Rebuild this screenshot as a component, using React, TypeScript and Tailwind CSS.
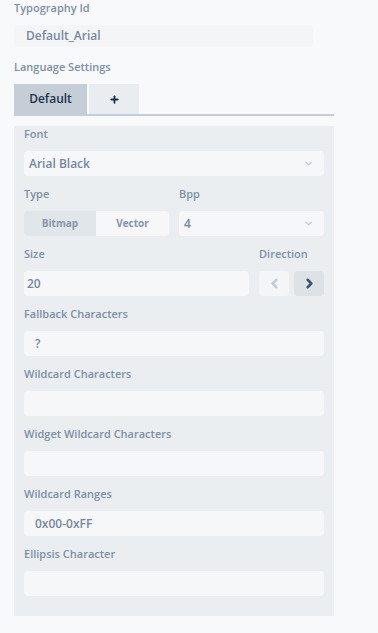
import { ChevronDown, ChevronLeft, ChevronRight, Plus } from 'lucide-react';

const Label = ({ children }: { children: React.ReactNode }) => (
  <div className="h-4 mt-[10px] mb-[9px] text-[11px] leading-4 font-semibold text-[#7f8ea3]">{children}</div>
);

const Field = ({ value, pad = 'pl-[11px]' }: { value?: string; pad?: string }) => (
  <div className={`h-[25px] rounded bg-[#f5f7f9] flex items-center text-[12px] font-semibold text-[#78879b] ${pad}`}>
    {value}
  </div>
);

const Select = ({ value }: { value: string }) => (
  <div className="h-[25px] rounded bg-[#f5f7f9] flex items-center justify-between pl-[5px] pr-[10px] text-[12px] font-semibold text-[#78879b]">
    <span>{value}</span>
    <ChevronDown className="w-[11px] h-[11px] text-[#c3cbd4]" strokeWidth={3} />
  </div>
);

export default function App() {
  return (
    <div className="min-h-[633px] bg-[#f8f9fb] pl-[14px] pb-[17px]" style={{ fontFamily: '"Open Sans", "Noto Sans", sans-serif' }}>
      <div className="h-[15px] text-[11px] leading-[15px] font-semibold text-[#7f8ea3]">Typography Id</div>
      <div className="mt-[10px] w-[299px] h-[22px] rounded bg-[#f3f5f7] flex items-center pl-[12px] text-[12px] font-semibold text-[#78879b]">
        Default_Arial
      </div>
      <div className="mt-[12px] h-4 text-[11px] leading-4 font-semibold text-[#7f8ea3]">Language Settings</div>

      <div className="mt-[9px] w-[320px]">
        <div className="flex gap-[2px] border-b-2 border-[#c5cdd6]">
          <div className="w-[73px] h-[30px] bg-[#c5cdd6] flex items-center justify-center text-[12px] font-semibold text-[#1f3150]">
            Default
          </div>
          <div className="w-[50px] h-[30px] bg-[#e9edf0] flex items-center justify-center">
            <Plus className="w-[11px] h-[11px] text-[#1f3150]" strokeWidth={4} />
          </div>
        </div>

        <div className="bg-[#ebeef1] px-[10px] pb-[20px]">
          <Label>Font</Label>
          <Select value="Arial Black" />

          <div className="grid grid-cols-2 gap-x-[10px]">
            <div>
              <Label>Type</Label>
              <div className="flex h-[25px] rounded overflow-hidden text-[10px] font-bold text-[#8994a6]">
                <div className="w-[72px] bg-[#e1e6eb] flex items-center justify-center">Bitmap</div>
                <div className="flex-1 bg-[#f5f7f9] flex items-center justify-center">Vector</div>
              </div>
            </div>
            <div>
              <Label>Bpp</Label>
              <Select value="4" />
            </div>
          </div>

          <div className="flex gap-[10px]">
            <div className="flex-1">
              <Label>Size</Label>
              <Field value="20" pad="pl-[3px]" />
            </div>
            <div className="w-[65px]">
              <Label>Direction</Label>
              <div className="flex justify-between">
                <div className="w-[30px] h-[25px] rounded bg-[#f3f5f7] flex items-center justify-center">
                  <ChevronLeft className="w-[15px] h-[15px] text-[#c5ccd4]" strokeWidth={4} />
                </div>
                <div className="w-[30px] h-[25px] rounded bg-[#dde2e7] flex items-center justify-center">
                  <ChevronRight className="w-[15px] h-[15px] text-[#3e5371]" strokeWidth={4} />
                </div>
              </div>
            </div>
          </div>

          <Label>Fallback Characters</Label>
          <Field value="?" />
          <Label>Wildcard Characters</Label>
          <Field />
          <Label>Widget Wildcard Characters</Label>
          <Field />
          <Label>Wildcard Ranges</Label>
          <Field value="0x00-0xFF" />
          <Label>Ellipsis Character</Label>
          <Field />
        </div>
      </div>
    </div>
  );
}
